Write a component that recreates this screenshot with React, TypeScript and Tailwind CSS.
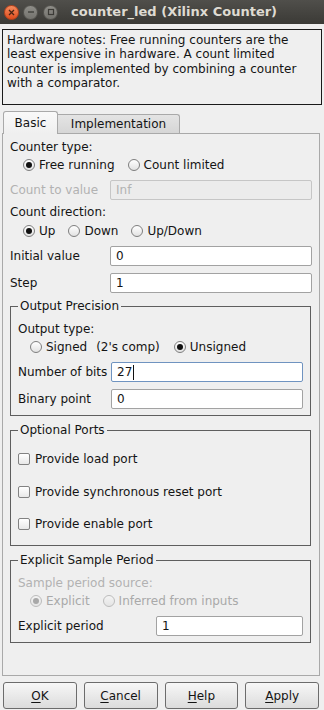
import React from "react";

function Radio({ checked, disabled }: { checked?: boolean; disabled?: boolean }) {
  return (
    <span
      className={`w-[12px] h-[12px] shrink-0 rounded-full border flex items-center justify-center bg-linear-to-b ${
        disabled ? "border-[#bcbcbc] from-[#f4f4f4] to-[#e4e4e4]" : "border-[#7e7e7e] from-white to-[#e2e2e2]"
      }`}
    >
      {checked && <span className={`w-[6px] h-[6px] rounded-full ${disabled ? "bg-[#a8a8a8]" : "bg-[#111]"}`} />}
    </span>
  );
}

function RadioItem({ label, checked, disabled }: { label: React.ReactNode; checked?: boolean; disabled?: boolean }) {
  return (
    <span className={`flex items-center gap-[4px] ${disabled ? "text-[#a9a9a9]" : ""}`}>
      <Radio checked={checked} disabled={disabled} />
      <span>{label}</span>
    </span>
  );
}

function Check({ label }: { label: string }) {
  return (
    <div className="h-[18px] flex items-center gap-[5px]">
      <span className="w-[12px] h-[12px] rounded-[2px] border border-[#828282] bg-linear-to-b from-white to-[#e8e8e8]" />
      <span>{label}</span>
    </div>
  );
}

function Field({ value, disabled, focused }: { value: string; disabled?: boolean; focused?: boolean }) {
  return (
    <div
      className={`h-[20px] flex-1 rounded-[2px] border flex items-center pl-[5px] ${
        disabled
          ? "bg-[#ececec] border-[#c6c6c6] text-[#b2b2b2]"
          : focused
            ? "bg-white border-[#6f93c0]"
            : "bg-white border-[#a2a2a2]"
      }`}
    >
      {value}
      {focused && <span className="ml-[1px] w-px h-[15px] bg-[#111]" />}
    </div>
  );
}

function Group({ title, className, children }: { title: string; className: string; children: React.ReactNode }) {
  return (
    <div className={`relative mr-[1px] border border-[#5e5e5e] pl-[7px] pr-[7px] ${className}`}>
      <span className="absolute left-[7px] -top-[8px] px-[2px] bg-[#efefef] leading-[14px]">{title}</span>
      {children}
    </div>
  );
}

function TitleBar() {
  return (
    <div className="h-[24px] bg-linear-to-b from-[#504f4b] to-[#3b3a36] flex items-center pl-[4px]">
      <span className="w-[15px] h-[15px] rounded-full bg-linear-to-b from-[#f48b5d] to-[#dd4b1a] border border-[#b8421b] flex items-center justify-center">
        <svg width="7" height="7" viewBox="0 0 7 7">
          <path d="M1 1L6 6M6 1L1 6" stroke="#4a2414" strokeWidth="1.3" />
        </svg>
      </span>
      <span className="ml-[4px] w-[15px] h-[15px] rounded-full bg-linear-to-b from-[#8e8d88] to-[#74736e] border border-[#55544f] flex items-center justify-center">
        <svg width="8" height="8" viewBox="0 0 8 8">
          <path d="M1 4H7" stroke="#3c3b37" strokeWidth="1.3" />
        </svg>
      </span>
      <span className="ml-[5px] w-[15px] h-[15px] rounded-full bg-linear-to-b from-[#8e8d88] to-[#74736e] border border-[#55544f] flex items-center justify-center">
        <svg width="8" height="8" viewBox="0 0 8 8">
          <rect x="1.5" y="1.5" width="5" height="5" fill="none" stroke="#3c3b37" strokeWidth="1.2" />
        </svg>
      </span>
      <span className="ml-[13px] text-[13px] font-bold text-[#dfdbd2]">counter_led (Xilinx Counter)</span>
    </div>
  );
}

function Button({ pre, u, post }: { pre?: string; u: string; post: string }) {
  return (
    <div className="flex-1 h-[27px] rounded-[3px] border border-[#6c6c6c] bg-linear-to-b from-[#f7f7f7] to-[#dcdcdc] flex items-center justify-center">
      <span>
        {pre}
        <span className="underline underline-offset-2">{u}</span>
        {post}
      </span>
    </div>
  );
}

export default function App() {
  return (
    <div className="w-[324px] h-[710px] bg-[#efefef] font-['DejaVu_Sans',sans-serif] text-[12px] text-[#141414] overflow-hidden">
      <TitleBar />

      {/* Notes */}
      <div className="mt-[5px] ml-[2px] w-[320px] h-[76px] border border-[#1a1a1a] pl-[4px] pr-[4px] pt-[3px] leading-[14.4px]">
        Hardware notes: Free running counters are the least expensive in hardware. A count limited counter is
        implemented by combining a counter with a comparator.
      </div>

      {/* Tabs */}
      <div className="mt-[6px] ml-[3px] flex items-end relative z-10">
        <div className="w-[55px] h-[23px] -mb-px rounded-t-[3px] border border-b-0 border-[#a9a9a9] bg-linear-to-b from-[#f9f9f9] to-[#efefef] flex items-center justify-center">
          Basic
        </div>
        <div className="w-[122px] h-[19px] rounded-tr-[3px] border-t border-r border-[#a9a9a9] bg-linear-to-b from-[#e4e4e4] to-[#d6d6d6] flex items-center justify-center">
          Implementation
        </div>
      </div>

      {/* Panel */}
      <div className="ml-[2px] w-[318px] h-[543px] border border-[#a9a9a9] px-[7px]">
        <div className="mt-[4px] h-[18px] flex items-center">Counter type:</div>
        <div className="h-[18px] flex items-center pl-[13px] gap-[13px]">
          <RadioItem label="Free running" checked />
          <RadioItem label="Count limited" />
        </div>
        <div className="mt-[6px] h-[20px] flex items-center">
          <span className="w-[100px] text-[#b2b2b2]">Count to value</span>
          <Field value="Inf" disabled />
        </div>
        <div className="mt-[3px] h-[18px] flex items-center">Count direction:</div>
        <div className="mt-[1px] h-[18px] flex items-center pl-[13px] gap-[13px]">
          <RadioItem label="Up" checked />
          <RadioItem label="Down" />
          <RadioItem label="Up/Down" />
        </div>
        <div className="mt-[6px] h-[20px] flex items-center">
          <span className="w-[100px]">Initial value</span>
          <Field value="0" />
        </div>
        <div className="mt-[7px] h-[20px] flex items-center">
          <span className="w-[100px]">Step</span>
          <Field value="1" />
        </div>

        <Group title="Output Precision" className="mt-[13px] h-[110px]">
          <div className="mt-[13px] h-[18px] flex items-center">Output type:</div>
          <div className="h-[18px] flex items-center pl-[12px] gap-[14px]">
            <RadioItem
              label={
                <>
                  Signed<span className="ml-[9px]">(2's comp)</span>
                </>
              }
            />
            <RadioItem label="Unsigned" checked />
          </div>
          <div className="mt-[6px] h-[20px] flex items-center">
            <span className="w-[93px]">Number of bits</span>
            <Field value="27" focused />
          </div>
          <div className="mt-[7px] h-[20px] flex items-center">
            <span className="w-[93px]">Binary point</span>
            <Field value="0" />
          </div>
        </Group>

        <Group title="Optional Ports" className="mt-[14px] h-[116px]">
          <div className="mt-[19px]">
            <Check label="Provide load port" />
          </div>
          <div className="mt-[15px]">
            <Check label="Provide synchronous reset port" />
          </div>
          <div className="mt-[14px]">
            <Check label="Provide enable port" />
          </div>
        </Group>

        <Group title="Explicit Sample Period" className="mt-[14px] h-[83px]">
          <div className="mt-[13px] h-[18px] flex items-center text-[#b2b2b2]">Sample period source:</div>
          <div className="h-[18px] flex items-center pl-[12px] gap-[13px]">
            <RadioItem label="Explicit" checked disabled />
            <RadioItem label="Inferred from inputs" disabled />
          </div>
          <div className="mt-[6px] h-[20px] flex items-center">
            <span className="w-[138px]">Explicit period</span>
            <Field value="1" />
          </div>
        </Group>
      </div>

      {/* Buttons */}
      <div className="mt-[6px] ml-[3px] w-[316px] flex gap-[7px]">
        <Button u="O" post="K" />
        <Button u="C" post="ancel" />
        <Button u="H" post="elp" />
        <Button u="A" post="pply" />
      </div>
    </div>
  );
}
